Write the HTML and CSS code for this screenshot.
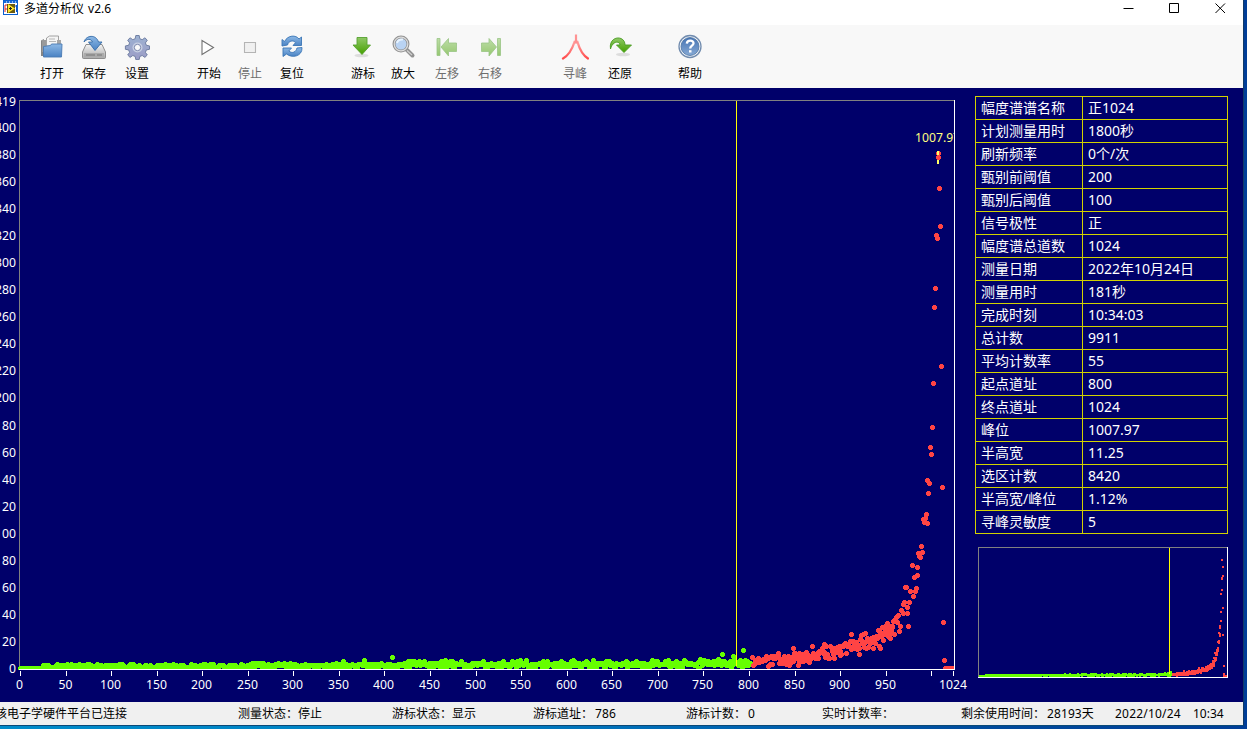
FILE: index.html
```html
<!DOCTYPE html>
<html lang="zh-CN">
<head>
<meta charset="utf-8">
<title>多道分析仪 v2.6</title>
<link rel="stylesheet" href="styles.css">
</head>
<body>
<svg width="0" height="0" class="defs">
  <defs>
    <linearGradient id="blue" x1="0" y1="0" x2="0" y2="1"><stop offset="0" stop-color="#8db9e6"/><stop offset="1" stop-color="#4a82c3"/></linearGradient>
    <linearGradient id="metal" x1="0" y1="0" x2="0" y2="1"><stop offset="0" stop-color="#f4f4f4"/><stop offset="1" stop-color="#a9a9a9"/></linearGradient>
    <linearGradient id="green" x1="0" y1="0" x2="0" y2="1"><stop offset="0" stop-color="#8fc866"/><stop offset="1" stop-color="#45a000"/></linearGradient>
    <linearGradient id="gear" x1="0" y1="0" x2="0" y2="1"><stop offset="0" stop-color="#9db2d2"/><stop offset="1" stop-color="#9c9cc6"/></linearGradient>
    <linearGradient id="peak" x1="0" y1="0" x2="0" y2="1"><stop offset="0" stop-color="#ffa0a0"/><stop offset="1" stop-color="#ff4c4c"/></linearGradient>
    <linearGradient id="help" x1="0" y1="0" x2="0" y2="1"><stop offset="0" stop-color="#4674b4"/><stop offset="1" stop-color="#86a9d4"/></linearGradient>
  </defs>
</svg>
<div class="window">
  <header class="titlebar">
    <svg class="app-icon" width="16" height="16" viewBox="0 0 16 16"><rect x=".5" y=".5" width="14" height="14" fill="#fff" stroke="#0a5fd0"/><path d="M1 1h13v2H1z" fill="#1769d8"/><path d="M3 2h1M6 2h1M9 2h1M12 2h1" stroke="#fff"/><path d="M2 5v7M2 5h2M2 9h2" stroke="#e02020" fill="none"/><path d="M13.500 5v7M11 6h2" stroke="#0a52c8" fill="none"/><path d="M4 4h8v9H4z" fill="#6a5a10"/><path d="M5 4l7 4.500L5 13z" fill="#ffe52c"/><path d="M6 8.500h3M7.500 7v3" stroke="#222"/></svg>
    <h1 class="title">多道分析仪 v2.6</h1>
    <div class="controls">
      <svg width="11" height="11" viewBox="0 0 11 11"><path d="M.5 5.500h10" stroke="#000"/></svg>
      <svg width="11" height="11" viewBox="0 0 11 11"><path d="M.5 .5h9v9h-9z" fill="none" stroke="#000"/></svg>
      <svg width="11" height="11" viewBox="0 0 11 11"><path d="M.5 .5l9.500 9.500M10 .5l-9.500 9.500" stroke="#000"/></svg>
    </div>
  </header>

  <nav class="toolbar">
    <button class="tool g32"><svg viewBox="0 0 26 26"><path d="M2 22V6.500l3-1.500v17z" fill="#858585"/><path d="M3 6h4v12H3z" fill="#9a9a9a"/><path d="M7.500 12V4l3-2h9v11z" fill="#f5f5f5" stroke="#999" stroke-width=".9"/><path d="M10 5h6M10 7.500h7" stroke="#b7b7b7"/><path d="M18 6h4v7h-4z" fill="#a6a6a6"/><path d="M4.500 12.500l7-1 1-1.500H23l-.5 13h-18z" fill="url(#blue)" stroke="#497bb3" stroke-width=".9"/></svg>打开</button>
    <button class="tool g2"><svg viewBox="0 0 26 26"><path d="M5 10.500h16l3.500 7.500v5.500q0 1-1 1H2.500q-1 0-1-1V18z" fill="url(#metal)" stroke="#858585" stroke-width=".9"/><path d="M3 19h20v4H3z" fill="#aaa"/><path d="M5 21h9M16 21h5" stroke="#777" stroke-width="1.200"/><path d="M3 8C5 1 15 0 17.500 8H21l-7 8.500L7.500 8h4C10 4.500 6 4.500 3 8z" fill="url(#blue)" stroke="#386da8" stroke-width=".9"/></svg>保存</button>
    <button class="tool g3"><svg viewBox="-1 0 26 26"><g fill="url(#gear)" stroke="#68779d" stroke-width=".9"><path d="M10.800 1.500h3.400l.6 3.200 2.400 1 2.700-1.900 2.400 2.400-1.900 2.700 1 2.400 3.100.6v3.400l-3.100.6-1 2.400 1.900 2.700-2.400 2.400-2.700-1.900-2.400 1-.6 3.100h-3.400l-.6-3.100-2.400-1-2.700 1.900-2.400-2.400 1.900-2.700-1-2.400-3.200-.6v-3.400l3.200-.6 1-2.400-1.900-2.700 2.400-2.400 2.700 1.900 2.400-1z"/></g><circle cx="12.500" cy="13.500" r="5" fill="#c8d0e3"/><circle cx="12.500" cy="13.500" r="3.200" fill="#fafafa" stroke="#7b87ad"/></svg>设置</button>
    <button class="tool g32"><svg viewBox="0 0 26 26"><path d="M6 6.500l11.500 7L6 20.500z" fill="#fff" stroke="#727272" stroke-width="1.100"/></svg>开始</button>
    <button class="tool g1 off"><svg viewBox="0 0 26 26"><path d="M7.500 8.500h11v10h-11z" fill="#f0f0f0" stroke="#b4b4b4" stroke-width="1.100"/></svg>停止</button>
    <button class="tool g2"><svg viewBox="0 0 26 26"><path d="M3 12V5.500l2.500 2C9 .8 17 .8 20 5L22.500 3v8.500H14l2.500-2.800C14 5.500 9.500 7 8.500 11z" fill="url(#blue)" stroke="#3b76b6" stroke-width=".9"/><path d="M23 13.500c.5 9-10 11-15.500 6.500L4 22.500V14h8.500L9.800 17c3.700 3 7.200 1 8.200-3z" fill="url(#blue)" stroke="#3b76b6" stroke-width=".9"/></svg>复位</button>
    <button class="tool g31"><svg viewBox="1 0 26 26"><ellipse cx="12.500" cy="21.500" rx="7" ry="1.800" fill="#ddd"/><path d="M8 3.500h10v7.500h3.500L13 20.500 4 11h4z" fill="url(#green)" stroke="#57a231" stroke-width=".9"/></svg>游标</button>
    <button class="tool"><svg viewBox="0 0 26 26"><path d="M17 16l5.500 5.500" stroke="#929292" stroke-width="4" stroke-linecap="round"/><path d="M17 16.500l5 4.500" stroke="#d0d0d0" stroke-width="1.200"/><circle cx="11" cy="10" r="7" fill="#b9d3f3" stroke="#929292" stroke-width="3"/><circle cx="11" cy="10" r="6.800" fill="none" stroke="#ddd" stroke-width="1.200"/><path d="M7 9q1-4 6-3.500" stroke="#e8f4ff" stroke-width="2" fill="none"/></svg>放大</button>
    <button class="tool g4 off"><svg viewBox="0 0 26 26"><g opacity=".55"><path d="M3 4.500h3v17H3z" fill="url(#green)" stroke="#4d9c28" stroke-width=".8"/><path d="M7 13l7.500-8.500V9H22.500v8.500h-8V22z" fill="url(#green)" stroke="#4d9c28" stroke-width=".8"/></g></svg>左移</button>
    <button class="tool g3 off"><svg viewBox="-2 0 26 26"><g opacity=".55"><path d="M18.500 4.500h3v17h-3z" fill="url(#green)" stroke="#4d9c28" stroke-width=".8"/><path d="M17.500 13L10 4.500V9H2.500v8.500H10V22z" fill="url(#green)" stroke="#4d9c28" stroke-width=".8"/></g></svg>右移</button>
    <button class="tool g45 off"><svg class="wide" viewBox="-1 0 28 28"><path d="M1.500 25.500C8 22 11 15 13 9h3c2 7 5 13 10.500 16.500" transform="translate(-.5)" fill="none" stroke="url(#peak)" stroke-width="2.300" stroke-linecap="round"/><path d="M14 1.500v9" stroke="#ff9494" stroke-width="2.200"/><path d="M14 4l-2 6h4z" fill="#ff9090"/></svg>寻峰</button>
    <button class="tool g5"><svg viewBox="-1 0 26 26"><ellipse cx="15" cy="20.500" rx="7" ry="1.800" fill="#ddd"/><path d="M2.500 15C1 6 8 2.500 13 4.500c3 1.300 4 4 4 6.500h6.500L16 18.500 8.500 11H12C11.500 6.500 4.500 7 2.500 15z" fill="url(#green)" stroke="#4a9c22" stroke-width=".9"/></svg>还原</button>
    <button class="tool g30"><svg viewBox="0 0 26 26"><circle cx="13" cy="12.500" r="11" fill="#f4f6fa" stroke="#708bae" stroke-width="1.300"/><circle cx="13" cy="12.500" r="9" fill="url(#help)" stroke="#47719f" stroke-width=".8"/><path d="M9.800 9.700c.3-4.200 7-4 6.700-.3-.2 2.300-3.300 2.300-3.300 5" fill="none" stroke="#fff" stroke-width="2.300"/><path d="M12 16.200h2.500v2.300H12z" fill="#fff"/></svg>帮助</button>
  </nav>

  <main class="main">
    <svg id="spectrum" class="spectrum" width="970" height="614" viewBox="0 88 970 614"></svg>
    <aside class="side">
      <table class="params">
        <tr><th>幅度谱谱名称</th><td>正1024</td></tr>
        <tr><th>计划测量用时</th><td>1800秒</td></tr>
        <tr><th>刷新频率</th><td>0个/次</td></tr>
        <tr><th>甄别前阈值</th><td>200</td></tr>
        <tr><th>甄别后阈值</th><td>100</td></tr>
        <tr><th>信号极性</th><td>正</td></tr>
        <tr><th>幅度谱总道数</th><td>1024</td></tr>
        <tr><th>测量日期</th><td>2022年10月24日</td></tr>
        <tr><th>测量用时</th><td>181秒</td></tr>
        <tr><th>完成时刻</th><td>10:34:03</td></tr>
        <tr><th>总计数</th><td>9911</td></tr>
        <tr><th>平均计数率</th><td>55</td></tr>
        <tr><th>起点道址</th><td>800</td></tr>
        <tr><th>终点道址</th><td>1024</td></tr>
        <tr><th>峰位</th><td>1007.97</td></tr>
        <tr><th>半高宽</th><td>11.25</td></tr>
        <tr><th>选区计数</th><td>8420</td></tr>
        <tr><th>半高宽/峰位</th><td>1.12%</td></tr>
        <tr><th>寻峰灵敏度</th><td>5</td></tr>
      </table>
      <svg id="overview" class="overview" width="250" height="131" viewBox="978 547 250 131"></svg>
    </aside>
  </main>

  <footer class="status">
    <span class="cut">核电子学硬件平台已连接</span>
    <span>测量状态：<b>停止</b></span>
    <span>游标状态：<b>显示</b></span>
    <span>游标道址：<b class="num">786</b></span>
    <span>游标计数：<b class="num">0</b></span>
    <span>实时计数率：</span>
    <span>剩余使用时间：<b class="num">28193天</b></span>
    <span class="date">2022/10/24</span>
    <span>10:34</span>
  </footer>
</div>
<script src="plot.js"></script>
</body>
</html>
```

FILE: styles.css
```css
* { box-sizing: border-box; }

body {
  margin: 0;
  width: 1247px;
  height: 729px;
  overflow: hidden;
  font-family: "Noto Sans", "Noto Sans CJK SC", sans-serif;
  font-size: 12px;
  color: #000;
  background: linear-gradient(90deg, #008bca 0, #0082c4 35%, #0068b4 56%, #004a9c 80%, #003e98 100%);
}

.defs { position: absolute; }

.window {
  display: flex;
  flex-direction: column;
  width: 1244px;
  height: 726px;
  overflow: hidden;
  background: #fff;
  border-right: 1px solid #103a68;
  border-bottom: 1px solid #0b4a78;
}

.titlebar {
  display: flex;
  flex: 0 0 25px;
  padding-left: 3px;
}

.app-icon { flex: none; }

.title {
  margin: 0 0 0 5px;
  font-size: 12px;
  font-weight: 400;
  line-height: 17px;
  word-spacing: 1px;
  white-space: nowrap;
}

.controls {
  display: flex;
  gap: 35px;
  margin: 3px 17px 0 auto;
}

.toolbar {
  display: flex;
  flex: 0 0 63px;
  background: #f8f8f8;
}

.tool {
  display: flex;
  flex: 0 0 40px;
  flex-direction: column;
  align-items: center;
  height: 63px;
  padding: 9px 0 0;
  border: 0;
  background: none;
  font: inherit;
  line-height: 18px;
  color: #000;
  white-space: nowrap;
}

.tool svg {
  flex: none;
  width: 26px;
  height: 26px;
  margin-bottom: 5px;
}

.tool .wide {
  width: 28px;
  height: 28px;
  margin: -1px 0 4px;
}

.off { color: #6e6e6e; }
.g1 { margin-left: 1px; }
.g2 { margin-left: 2px; }
.g3 { margin-left: 3px; }
.g4 { margin-left: 4px; }
.g5 { margin-left: 5px; }
.g30 { margin-left: 30px; }
.g31 { margin-left: 31px; }
.g32 { margin-left: 32px; }
.g45 { margin-left: 45px; }

.main {
  display: flex;
  flex: 0 0 614px;
  background: #00006a;
}

.spectrum { flex: none; }

.spectrum text {
  font-family: "Noto Sans", sans-serif;
  font-size: 12.2px;
  fill: #fff;
}

.spectrum .peak-label { fill: #ffff80; }

.side {
  display: flex;
  flex-direction: column;
  padding: 8px 0 0 5px;
}

.params {
  width: 253px;
  border-collapse: collapse;
  table-layout: fixed;
  font-size: 14px;
  color: #fff;
}

.params tr { height: 23px; }

.params th,
.params td {
  height: 23px;
  padding: 0 0 0 5px;
  border: 1px solid #d2d200;
  font-weight: 400;
  line-height: 22px;
  text-align: left;
  white-space: nowrap;
}

.params th { width: 107px; }

.overview { margin: 13px 0 0 3px; }

.status {
  display: grid;
  flex: 0 0 23px;
  grid-template-columns: 238px 154px 141px 153px 136px 139px 154px 78px 50px;
  background: #f0f0f0;
  font-size: 12px;
  line-height: 23px;
  white-space: nowrap;
}

.status b { font-weight: 400; }

.status .num {
  margin-left: 2px;
  letter-spacing: .1px;
}

.date { letter-spacing: .2px; }

.cut { text-indent: -5px; }
```

FILE: plot.js
```js
const NS = 'http://www.w3.org/2000/svg';

function add(parent, tag, attrs, text) {
  const el = document.createElementNS(NS, tag);
  for (const key in attrs) el.setAttribute(key, attrs[key]);
  if (text !== undefined) el.textContent = text;
  parent.appendChild(el);
  return el;
}

let seed = 20221024;
function rand() {
  seed = (seed * 1664525 + 1013904223) % 4294967296;
  return seed / 4294967296;
}

const BASE = 668;
const STEP = 1.356;

// Background channels below the region of interest
const green = [[392, 657], [722, 654], [743, 650], [733, 656], [364, 660], [445, 660], [343, 661], [520, 660], [573, 660]];
for (let x = 20; x <= 750; x += 0.912) {
  let n = 0;
  if (x > 42) {
    const top = x < 240 ? 3.4 : x < 400 ? 4.2 : x < 630 ? 5.600 : x < 700 ? 5.800 : 7.500;
    const low = x < 400 ? 0 : x < 700 ? 0.3 : 1;
    n = Math.floor(low + (rand() + rand()) / 2 * (top - low) * 1.15);
  }
  green.push([Math.round(x), Math.round(BASE - n * STEP)]);
}

// Channels of the rising slope and the peak
const red = [
  [939, 188], [940, 226], [936, 235], [937, 238], [935, 288], [934, 307], [941, 366], [933, 383],
  [932, 427], [930, 447], [931, 454], [927, 480], [929, 483], [928, 493], [942, 487], [926, 514],
  [925, 518], [923, 519], [924, 522], [927, 523], [921, 546], [922, 552], [918, 553], [919, 556],
  [920, 557], [912, 565], [917, 567], [917, 575], [914, 577], [905, 587], [906, 587], [916, 588],
  [910, 591], [915, 591], [913, 596], [909, 602], [904, 602], [903, 604], [907, 607], [901, 610],
  [907, 613], [903, 613], [898, 615], [896, 617], [895, 619], [893, 621], [897, 622], [900, 626],
  [908, 626], [899, 631], [894, 634], [890, 638], [892, 627], [887, 623], [885, 626], [889, 628],
  [883, 640], [887, 633], [888, 636], [879, 646], [880, 648], [873, 648], [943, 622], [944, 660],
  [865, 633], [851, 634], [824, 644], [793, 648], [812, 646], [859, 654]
];
for (let x = 945; x <= 952; x++) red.push([x, BASE]);

const trend = [[752, 660, 7], [793, 658, 7], [813, 656, 7], [827, 652, 6], [840, 650, 6], [853, 645, 7], [867, 641, 8], [873, 637, 8], [883, 632, 7], [892, 627, 6]];
for (let x = 752; x < 892; x += 0.912) {
  let i = 0;
  while (x > trend[i + 1][0]) i++;
  const [x0, y0, s0] = trend[i];
  const [x1, y1, s1] = trend[i + 1];
  const t = (x - x0) / (x1 - x0);
  const spread = s0 + (s1 - s0) * t;
  const y = y0 + (y1 - y0) * t + (rand() + rand() - 1) * spread * 1.25;
  red.push([Math.round(x), Math.min(BASE - 2, Math.round(y))]);
}

const dot = ([x, y]) => `M${x - 1} ${y - 2}h3v1h1v3h-1v1h-3v-1h-1v-3h1z`;
const smallDot = ([x, y]) => {
  const mx = Math.round(978.500 + (x - 20) * 0.2645);
  const my = Math.round(676 - (BASE - y) * 0.2262);
  return `M${mx} ${my - 1}h2v2h-2z`;
};
const crisp = { 'shape-rendering': 'crispEdges' };

const main = document.getElementById('spectrum');
add(main, 'path', { d: 'M19.500 669V100.500H954', stroke: '#808080', fill: 'none', ...crisp });
add(main, 'path', { d: green.map(dot).join(''), fill: '#66ff00', ...crisp });
add(main, 'path', { d: 'M736.500 101V666', stroke: '#ffff00', ...crisp });
add(main, 'path', { d: red.map(dot).join(''), fill: '#ff4444', ...crisp });
add(main, 'path', { d: dot([938, 153]), fill: '#ff4444', ...crisp });
add(main, 'path', { d: 'M938 151V164', stroke: '#ffff66', 'stroke-width': 2, ...crisp });
add(main, 'path', { d: dot([938, 157]), fill: '#ff4444', ...crisp });
add(main, 'path', { d: 'M19 670h935v3H19z', fill: '#00006a', ...crisp });
add(main, 'path', { d: 'M19 669.500H954.500V100', stroke: '#fff', fill: 'none', ...crisp });

for (let i = 0; i <= 20; i++) {
  const x = Math.round(20 + i * 45.56);
  add(main, 'path', { d: `M${x + 0.5} 671V676`, stroke: '#fff', ...crisp });
  if (i < 20) add(main, 'text', { x: x - 0.5, y: 689, 'text-anchor': 'middle' }, i * 50);
}
add(main, 'path', { d: 'M953.500 671V676', stroke: '#fff', ...crisp });
add(main, 'text', { x: 953, y: 689, 'text-anchor': 'middle' }, 1024);

for (let v = 0; v <= 400; v += 20) {
  add(main, 'text', { x: 16, y: Math.round(672.950 - v * 1.3525), 'text-anchor': 'end' }, v);
}
add(main, 'text', { x: 16, y: 106, 'text-anchor': 'end' }, 419);

const clip = add(main, 'clipPath', { id: 'plotArea' });
add(clip, 'rect', { x: 20, y: 101, width: 934, height: 568 });
add(main, 'text', { x: 915, y: 142, class: 'peak-label', 'clip-path': 'url(#plotArea)' }, '1007.97');

const mini = document.getElementById('overview');
add(mini, 'path', { d: 'M978.500 677V547.500H1227', stroke: '#808080', fill: 'none', ...crisp });
add(mini, 'path', { d: green.map(smallDot).join(''), fill: '#66ff00', ...crisp });
add(mini, 'path', { d: red.concat([[938, 153], [938, 157]]).map(smallDot).join(''), fill: '#ff4444', ...crisp });
add(mini, 'path', { d: 'M1169.500 548V674', stroke: '#ffff00', ...crisp });
add(mini, 'path', { d: 'M978 677.500H1227.500V547', stroke: '#fff', fill: 'none', ...crisp });
```
